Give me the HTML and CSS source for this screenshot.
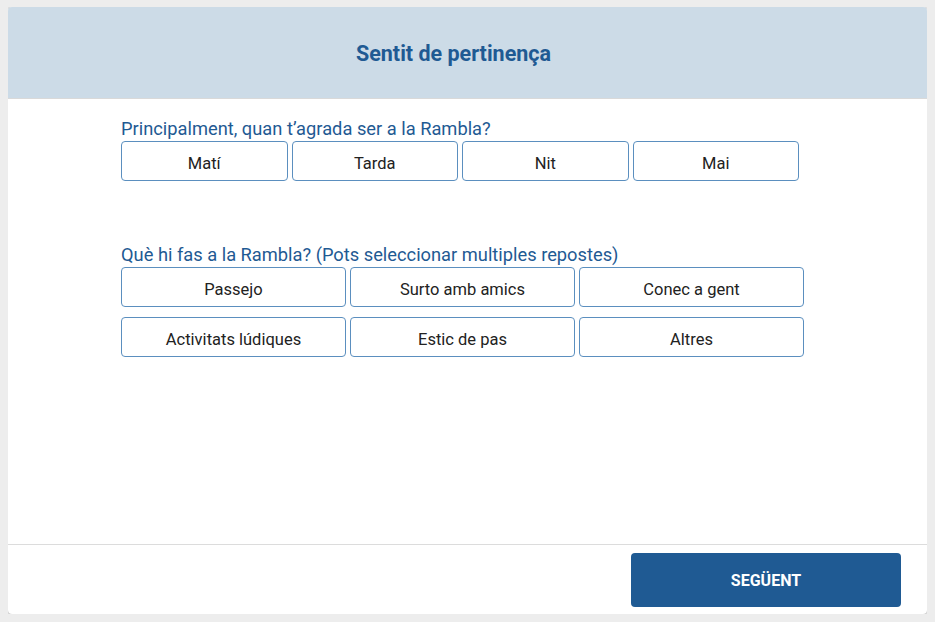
FILE: index.html
```html
<!DOCTYPE html>
<html lang="ca">
<head>
<meta charset="utf-8">
<title>Sentit de pertinença</title>
<link rel="stylesheet" href="styles.css">
</head>
<body>
<div class="card">
  <header class="card-header">
    <h1 class="title">Sentit de pertinença</h1>
  </header>
  <main class="card-body">
    <section class="question">
      <p class="label">Principalment, quan t’agrada ser a la Rambla?</p>
      <div class="options options-4">
        <button class="option">Matí</button>
        <button class="option">Tarda</button>
        <button class="option">Nit</button>
        <button class="option">Mai</button>
      </div>
    </section>
    <section class="question question-2">
      <p class="label">Què hi fas a la Rambla? (Pots seleccionar multiples repostes)</p>
      <div class="options options-3">
        <button class="option">Passejo</button>
        <button class="option">Surto amb amics</button>
        <button class="option">Conec a gent</button>
        <button class="option">Activitats lúdiques</button>
        <button class="option">Estic de pas</button>
        <button class="option">Altres</button>
      </div>
    </section>
  </main>
  <footer class="card-footer">
    <button class="next">SEGÜENT</button>
  </footer>
</div>
</body>
</html>
```
FILE: styles.css
```css
html, body {
  background: #ededed;
}
body {
  margin: 7px 8px;
  font-family: Roboto, "Liberation Sans", Arial, sans-serif;
}
.card {
  width: 919px;
  height: 607px;
  background: #ffffff;
  border-radius: 4px;
  box-shadow: 0 0 2px rgba(0,0,0,0.25), 0 1px 3px rgba(0,0,0,0.12);
  display: flex;
  flex-direction: column;
  overflow: hidden;
}
.card-header {
  height: 91px;
  background: #ccdbe7;
  border-bottom: 1px solid #d9d9d9;
  display: flex;
  align-items: center;
  justify-content: center;
  padding-right: 28px;
  flex-shrink: 0;
}
.title {
  margin: 0;
  font-size: 21.5px;
  font-weight: 700;
  color: #1f5a93;
  line-height: 26px;
  padding-top: 3px;
}
.card-body {
  flex: 1;
  padding: 20px 0 0 113px;
}
.question-2 {
  margin-top: 64px;
}
.label {
  margin: 0 0 2px 0;
  font-size: 18.3px;
  line-height: 20px;
  color: #1f5a93;
}
.options {
  display: grid;
  gap: 10px 4px;
}
.options-4 {
  grid-template-columns: repeat(4, 166.5px);
}
.options-3 {
  grid-template-columns: repeat(3, 225px);
}
.option {
  height: 40px;
  margin: 0;
  padding: 4px 0 0 0;
  background: #ffffff;
  border: 1px solid #5b8fbf;
  border-radius: 4px;
  font-family: Roboto, "Liberation Sans", Arial, sans-serif;
  font-size: 16.5px;
  color: #222222;
}
.card-footer {
  height: 70px;
  border-top: 1px solid #dcdcdc;
  display: flex;
  justify-content: flex-end;
  align-items: flex-start;
  padding: 8px 26px 0 0;
  box-sizing: border-box;
  flex-shrink: 0;
}
.next {
  width: 270px;
  height: 54px;
  margin: 0;
  background: #1f5a93;
  border: none;
  border-radius: 4px;
  color: #ffffff;
  font-family: Roboto, "Liberation Sans", Arial, sans-serif;
  font-size: 16px;
  font-weight: 700;
}
```
